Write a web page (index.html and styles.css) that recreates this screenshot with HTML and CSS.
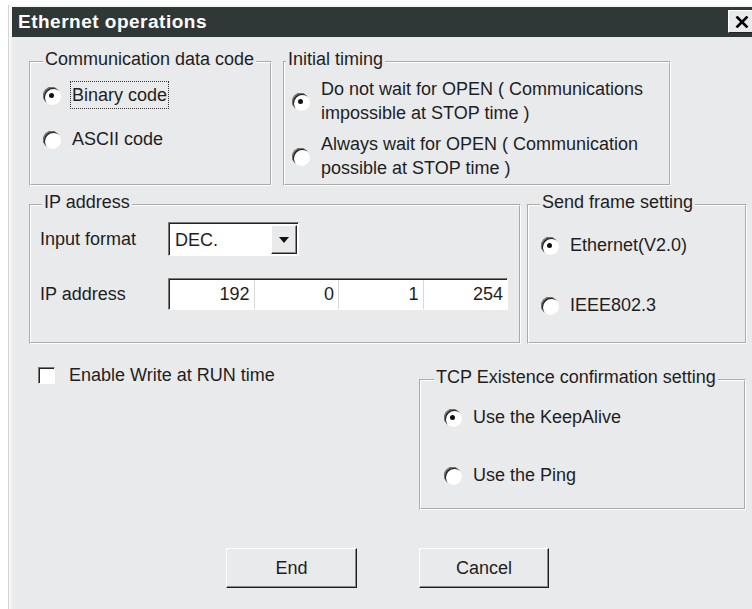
FILE: index.html
```html
<!DOCTYPE html>
<html lang="en">
<head>
    <meta charset="UTF-8">
    <meta name="viewport" content="width=device-width, initial-scale=1.0">
    <title>Ethernet operations</title>
    <link rel="stylesheet" href="styles.css">
</head>
<body>

    <div class="window">
        <div class="titlebar">
            <span class="title">Ethernet operations</span>
            <div class="close">
                <svg width="14" height="12" viewBox="0 0 14 12"><path d="M1.5 0.5 L12.5 11.5 M12.5 0.5 L1.5 11.5" stroke="#000" stroke-width="2.6" fill="none"/></svg>
            </div>
        </div>

        <div class="content">
            <div class="row row-top">
                <fieldset class="group group-code">
                    <legend>Communication data code</legend>
                    <div class="options">
                        <div class="option"><span class="radio checked"></span><span class="label focus">Binary code</span></div>
                        <div class="option"><span class="radio"></span><span class="label">ASCII code</span></div>
                    </div>
                </fieldset>

                <fieldset class="group group-timing">
                    <legend>Initial timing</legend>
                    <div class="options">
                        <div class="option"><span class="radio checked"></span><span class="label multi">Do not wait for OPEN ( Communications<br>impossible at STOP time )</span></div>
                        <div class="option"><span class="radio"></span><span class="label multi">Always wait for OPEN ( Communication<br>possible at STOP time )</span></div>
                    </div>
                </fieldset>
            </div>

            <div class="row row-mid">
                <fieldset class="group group-ip">
                    <legend>IP address</legend>
                    <div class="ip-body">
                        <div class="ip-row">
                            <span class="field-label">Input format</span>
                            <div class="combo">
                                <span class="combo-text">DEC.</span>
                                <span class="combo-btn"><span class="arrow"></span></span>
                            </div>
                        </div>
                        <div class="ip-row ip-row-addr">
                            <span class="field-label">IP address</span>
                            <div class="ip-field">
                                <span class="octet">192</span>
                                <span class="octet">0</span>
                                <span class="octet">1</span>
                                <span class="octet">254</span>
                            </div>
                        </div>
                    </div>
                </fieldset>

                <fieldset class="group group-frame">
                    <legend>Send frame setting</legend>
                    <div class="options">
                        <div class="option"><span class="radio checked"></span><span class="label">Ethernet(V2.0)</span></div>
                        <div class="option"><span class="radio"></span><span class="label">IEEE802.3</span></div>
                    </div>
                </fieldset>
            </div>

            <div class="row row-low">
                <div class="check-item">
                    <span class="checkbox"></span>
                    <span>Enable Write at RUN time</span>
                </div>

                <fieldset class="group group-tcp">
                    <legend>TCP Existence confirmation setting</legend>
                    <div class="options">
                        <div class="option"><span class="radio checked"></span><span class="label">Use the KeepAlive</span></div>
                        <div class="option"><span class="radio"></span><span class="label">Use the Ping</span></div>
                    </div>
                </fieldset>
            </div>

            <div class="row row-buttons">
                <button class="btn btn-end">End</button>
                <button class="btn btn-cancel">Cancel</button>
            </div>
        </div>
    </div>

</body>
</html>
```

FILE: styles.css
```css
html, body { margin: 0; height: 100%; overflow: hidden; background: #fff; }
body { font-family: "Liberation Sans", Arial, sans-serif; font-size: 18px; color: #1e1e1e; }

/* window frame */
.window { margin: 5px 0 0 9px; width: 760px; height: 620px; background: #e9eaec; border-top: 2px solid #f6f6f6; border-left: 3px solid #f6f6f6; box-shadow: -1px 0 0 #d6d6d6; }
.titlebar { height: 30px; background: #2f3836; display: flex; justify-content: space-between; align-items: flex-start; }
.title { color: #fff; font-weight: bold; font-size: 19px; letter-spacing: 0.5px; line-height: 30px; padding-left: 6px; }
.close { width: 26px; height: 21px; margin: 3px 14px 0 0; background: #e9eaec; border: 1px solid; border-color: #fff #222 #222 #fff; display: flex; align-items: center; justify-content: center; padding-right: 2px; }

.content { padding: 12px 0 0 17px; }
.row { display: flex; }
.row-mid { margin-top: 6px; }
.row-low { margin-top: 23px; align-items: flex-start; }
.row-buttons { margin-top: 38px; padding-left: 197px; gap: 62px; }

/* group boxes */
.group { margin: 0; padding: 0; min-width: 0; box-sizing: border-box; border: 2px groove #fff; }
.group legend { padding: 0 2px 5px; line-height: 20px; }
.group-code { width: 243px; height: 137px; }
.group-code legend { margin-left: 12px; }
.group-timing { width: 388px; height: 137px; margin-left: 11px; }
.group-timing legend { margin-left: 1px; }
.group-ip { width: 492px; height: 152px; }
.group-ip legend { margin-left: 11px; }
.group-frame { width: 220px; height: 152px; margin-left: 6px; }
.group-frame legend { margin-left: 11px; }
.group-tcp { width: 327px; height: 143px; }
.group-tcp legend { margin-left: 13px; }

/* radio options */
.options { display: flex; flex-direction: column; }
.group-code .options { padding: 7px 0 0 12px; gap: 16px; }
.group-timing .options { padding: 2px 0 0 7px; gap: 5px; }
.group-frame .options { padding: 14px 0 0 12px; gap: 32px; }
.group-tcp .options { padding: 11px 0 0 23px; gap: 30px; }
.option { display: flex; align-items: center; gap: 10px; }
.label { padding: 0 1px; border: 1px dotted transparent; line-height: 26px; }
.label.multi { line-height: 24px; }
.label.focus { border-color: #333; }

.radio { position: relative; flex: none; width: 17px; height: 17px; border-radius: 50%; background: #fff; box-shadow: inset 1px 1px 0 #7a7a7a, inset 2px 2px 0 #1e1e1e, 1px 1px 0 #fff; }
.radio.checked::after { content: ""; position: absolute; left: 6px; top: 6px; width: 5px; height: 5px; border-radius: 50%; background: #111; }

/* ip address box */
.ip-body { padding: 5px 0 0 9px; }
.ip-row { display: flex; align-items: center; }
.ip-row-addr { margin-top: 22px; }
.field-label { width: 128px; line-height: 26px; }
.combo, .ip-field { box-sizing: border-box; background: #fff; border: 1px solid; border-color: #7a7a7a #fff #fff #7a7a7a; box-shadow: inset 1px 1px 0 #222; }
.combo { width: 131px; height: 34px; display: flex; align-items: center; justify-content: space-between; padding: 2px 1px 1px 6px; }
.combo-text { line-height: 28px; }
.combo-btn { box-sizing: border-box; width: 26px; height: 29px; background: #e9eaec; border: 1px solid; border-color: #fff #222 #222 #fff; box-shadow: inset -1px -1px 0 #8a8a8a; display: flex; align-items: center; justify-content: center; }
.arrow { width: 0; height: 0; border-left: 5px solid transparent; border-right: 5px solid transparent; border-top: 6px solid #111; }
.ip-field { width: 340px; height: 32px; display: flex; padding: 1px 0 0 1px; }
.octet { flex: 1; text-align: right; padding-right: 4px; line-height: 29px; border-left: 1px solid #d8d8d8; }
.octet:first-child { border-left: none; }

/* checkbox */
.check-item { flex: 0 0 390px; box-sizing: border-box; padding-left: 9px; display: flex; align-items: center; gap: 14px; line-height: 16px; height: 16px; }
.checkbox { box-sizing: border-box; width: 17px; height: 17px; background: #fff; border: 1px solid; border-color: #7a7a7a #fff #fff #7a7a7a; box-shadow: inset 1px 1px 0 #222; }

/* push buttons */
.btn { box-sizing: border-box; width: 131px; height: 40px; font: inherit; color: inherit; background: #e9eaec; border: 1px solid; border-color: #fff #1e1e1e #1e1e1e #fff; box-shadow: inset -1px -1px 0 #8a8a8a; padding: 0; }
.btn-cancel { width: 130px; }
```
